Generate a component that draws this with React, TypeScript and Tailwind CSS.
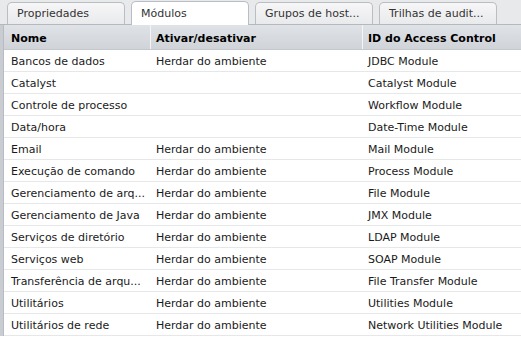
import React from 'react';

const tabs = [
  { label: 'Propriedades', active: false },
  { label: 'Módulos', active: true },
  { label: 'Grupos de host...', active: false },
  { label: 'Trilhas de audit...', active: false },
];

const rows: Array<[string, string, string]> = [
  ['Bancos de dados', 'Herdar do ambiente', 'JDBC Module'],
  ['Catalyst', '', 'Catalyst Module'],
  ['Controle de processo', '', 'Workflow Module'],
  ['Data/hora', '', 'Date-Time Module'],
  ['Email', 'Herdar do ambiente', 'Mail Module'],
  ['Execução de comando', 'Herdar do ambiente', 'Process Module'],
  ['Gerenciamento de arq...', 'Herdar do ambiente', 'File Module'],
  ['Gerenciamento de Java', 'Herdar do ambiente', 'JMX Module'],
  ['Serviços de diretório', 'Herdar do ambiente', 'LDAP Module'],
  ['Serviços web', 'Herdar do ambiente', 'SOAP Module'],
  ['Transferência de arqu...', 'Herdar do ambiente', 'File Transfer Module'],
  ['Utilitários', 'Herdar do ambiente', 'Utilities Module'],
  ['Utilitários de rede', 'Herdar do ambiente', 'Network Utilities Module'],
];

export default function App() {
  return (
    <div className="w-[521px] h-[343px] overflow-hidden bg-white text-[11px] text-[#1a1a1a] font-['DejaVu_Sans','Verdana',sans-serif]">
      <div className="flex items-end gap-[6px] h-[25px] pl-[7px] bg-[#e8e9eb] border-b border-[#b4b8be]">
        {tabs.map((t) => (
          <div
            key={t.label}
            className={`w-[118px] rounded-t-[5px] border border-b-0 border-[#b9bdc4] pl-[9px] pt-[1px] flex items-center text-[#333] ${
              t.active ? 'h-[24px] bg-white -mb-px' : 'h-[22px] bg-gradient-to-b from-[#f6f6f7] to-[#e9eaec]'
            }`}
          >
            {t.label}
          </div>
        ))}
      </div>
      <div className="flex">
        <div className="w-[4px] bg-[#c9ccd1] border-r border-[#b8bcc2] shrink-0" />
        <div className="flex-1">
          <div className="flex h-[25px] bg-gradient-to-b from-[#dfe2e6] to-[#d0d4d9] border-b border-[#c4c7cc] font-bold text-black">
            <div className="w-[147px] pl-[7px] pt-[5px] flex items-center border-r border-[#f4f5f6]">Nome</div>
            <div className="w-[212px] pl-[5px] pt-[5px] flex items-center border-r border-[#f4f5f6]">Ativar/desativar</div>
            <div className="flex-1 pl-[5px] pt-[5px] flex items-center">ID do Access Control</div>
          </div>
          {rows.map((r) => (
            <div key={r[0]} className="flex h-[22px] pt-[3px] items-center border-b border-[#e6e7e9]">
              <div className="w-[147px] pl-[7px] whitespace-nowrap overflow-hidden">{r[0]}</div>
              <div className="w-[212px] pl-[5px] whitespace-nowrap">{r[1]}</div>
              <div className="flex-1 pl-[5px] whitespace-nowrap">{r[2]}</div>
            </div>
          ))}
        </div>
      </div>
    </div>
  );
}
